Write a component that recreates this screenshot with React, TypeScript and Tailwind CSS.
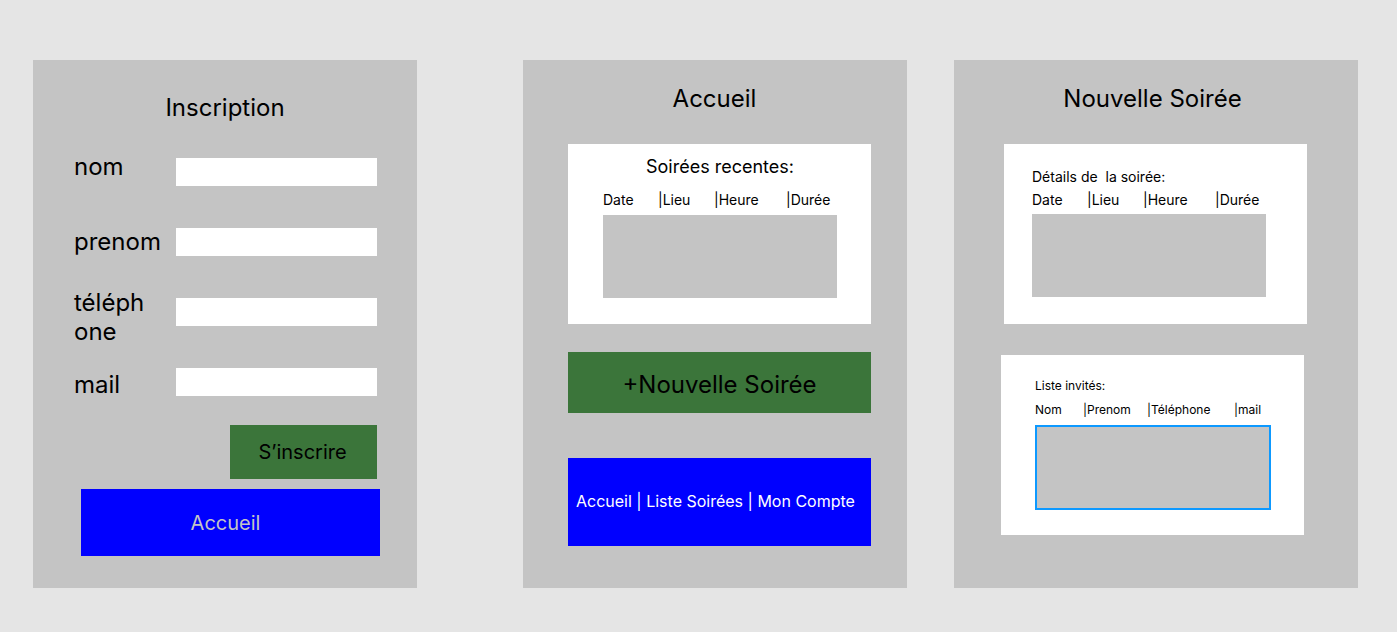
import type { ReactNode } from "react";

type Column = { label: string; width: string };

const partyColumns: Column[] = [
  { label: "Date", width: "w-[55px]" },
  { label: "|Lieu", width: "w-[56px]" },
  { label: "|Heure", width: "w-[72px]" },
  { label: "|Durée", width: "w-auto" },
];

const guestColumns: Column[] = [
  { label: "Nom", width: "w-[48px]" },
  { label: "|Prenom", width: "w-[64px]" },
  { label: "|Téléphone", width: "w-[87px]" },
  { label: "|mail", width: "w-auto" },
];

const fields: { id: string; type: string; label: ReactNode; spacing: string }[] = [
  { id: "nom", type: "text", label: "nom", spacing: "mb-[46px]" },
  { id: "prenom", type: "text", label: "prenom", spacing: "mb-8" },
  { id: "telephone", type: "tel", label: <>téléph<wbr />one</>, spacing: "mb-6" },
  { id: "mail", type: "email", label: "mail", spacing: "mb-0" },
];

function Panel({ className, children }: { className: string; children: ReactNode }) {
  return <section className={`shrink-0 grow bg-[#c4c4c4] ${className}`}>{children}</section>;
}

function ListTable({
  name,
  columns,
  className,
  headClass,
  areaClass,
}: {
  name: string;
  columns: Column[];
  className: string;
  headClass: string;
  areaClass: string;
}) {
  return (
    <table aria-label={name} className={`w-full table-fixed border-collapse ${className}`}>
      <thead>
        <tr>
          {columns.map((c) => (
            <th key={c.label} scope="col" className={`p-0 text-left font-normal whitespace-nowrap ${c.width} ${headClass}`}>
              {c.label}
            </th>
          ))}
        </tr>
      </thead>
      <tbody>
        <tr>
          <td colSpan={columns.length} className="p-0">
            <div className={`bg-[#c4c4c4] ${areaClass}`} />
          </td>
        </tr>
      </tbody>
    </table>
  );
}

function SignUp() {
  return (
    <Panel className="basis-[384px] pt-[33px] pb-8">
      <h1 className="text-center text-[24px] leading-[29px]">Inscription</h1>
      <form className="mt-[30px] pr-10 pl-[41px]" onSubmit={(e) => e.preventDefault()}>
        <div className="flex">
          <div className="flex w-[102px] flex-col text-[24px] leading-[29px]">
            {fields.map((f) => (
              <label key={f.id} htmlFor={f.id} className={f.spacing}>
                {f.label}
              </label>
            ))}
          </div>
          <div className="flex min-w-0 flex-1 flex-col gap-[42px] pt-1.5">
            {fields.map((f) => (
              <input key={f.id} id={f.id} name={f.id} type={f.type} className="h-7 w-full bg-white px-2 text-base outline-none" />
            ))}
          </div>
        </div>
        <button type="submit" className="mt-[26px] ml-auto block h-[54px] w-[147px] bg-[#3b753a] pr-0.5 text-[20px] leading-6">
          S’inscrire
        </button>
      </form>
      <nav className="mt-2.5 pr-[37px] pl-12">
        <a href="#accueil" className="flex h-[67px] items-center justify-center bg-[#0000ff] pr-2.5 text-[20px] leading-6 text-[#c4c4c4]">
          Accueil
        </a>
      </nav>
    </Panel>
  );
}

function Home() {
  return (
    <Panel className="basis-[384px] pt-6 pr-9 pb-[42px] pl-[45px]">
      <h1 id="accueil" className="pr-2.5 text-center text-[24px] leading-[29px]">Accueil</h1>
      <div className="mt-[31px] bg-white pt-3 pr-[34px] pb-[26px] pl-[35px]">
        <h2 className="text-center text-[18px] leading-[22px]">Soirées recentes:</h2>
        <ListTable
          name="Soirées recentes"
          columns={partyColumns}
          className="mt-[13px] text-[14px] leading-[17px]"
          headClass="pb-[7px]"
          areaClass="h-[83px]"
        />
      </div>
      <button type="button" className="mt-7 block h-[61px] w-full bg-[#3b753a] pt-1 text-[24px] leading-[29px]">
        +Nouvelle Soirée
      </button>
      <nav className="mt-[45px] flex h-[88px] items-center bg-[#0000ff] pb-0.5 pl-2 text-[16px] leading-[19px] text-white">
        <p className="whitespace-nowrap">
          <a href="#accueil">Accueil</a> | <a href="#soirees">Liste Soirées</a> | <a href="#compte">Mon Compte</a>
        </p>
      </nav>
    </Panel>
  );
}

function NewParty() {
  return (
    <Panel className="basis-[404px] pt-6 pb-[53px]">
      <h1 className="pr-[7px] text-center text-[24px] leading-[29px]">Nouvelle Soirée</h1>
      <div className="mt-[31px] mr-[51px] ml-[50px] bg-white pt-6 pr-[41px] pb-[27px] pl-7 text-[14px] leading-[17px]">
        <h2 className="whitespace-pre">{"Détails de  la soirée:"}</h2>
        <ListTable
          name="Détails de la soirée"
          columns={partyColumns}
          className="mt-1.5"
          headClass="pb-1.5"
          areaClass="h-[83px]"
        />
      </div>
      <div className="mt-[31px] mr-[54px] ml-[47px] bg-white pt-[23px] pr-[33px] pb-[25px] pl-[34px] text-[12px] leading-[15px]">
        <h2>Liste invités:</h2>
        <ListTable
          name="Liste invités"
          columns={guestColumns}
          className="mt-[9px]"
          headClass="pb-2"
          areaClass="h-[85px] border-2 border-[#0d99ff]"
        />
      </div>
    </Panel>
  );
}

export default function App() {
  return (
    <main className="flex min-h-screen items-start bg-[#e5e5e5] pt-[60px] pr-[39px] pb-11 pl-[33px] font-['Inter',sans-serif] text-black">
      <SignUp />
      <div className="w-[106px] shrink-0" />
      <Home />
      <div className="w-[47px] shrink-0" />
      <NewParty />
    </main>
  );
}
